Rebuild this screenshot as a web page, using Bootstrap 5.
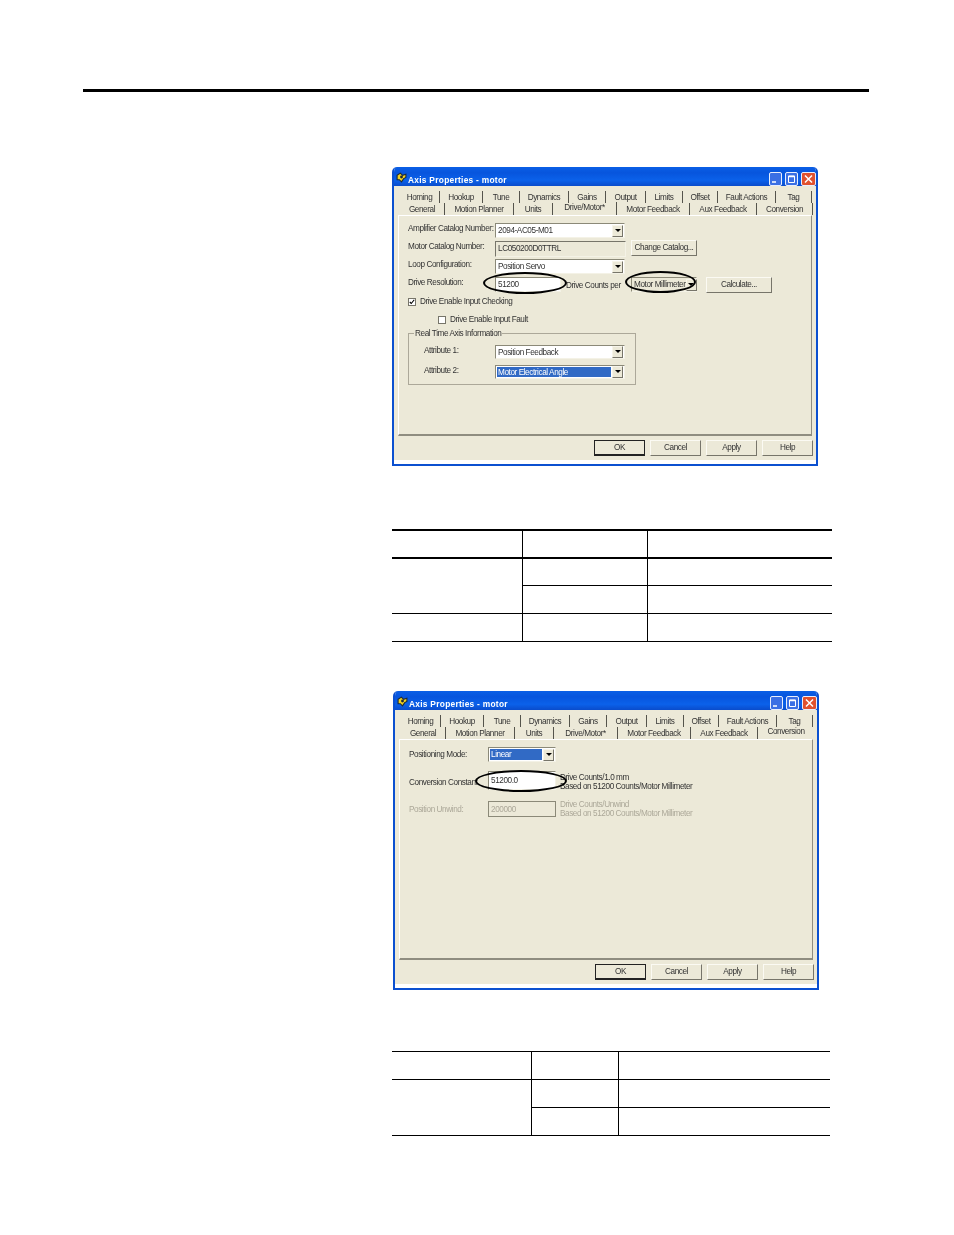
<!doctype html>
<html lang="en">
<head>
<meta charset="utf-8">
<title>Axis Properties</title>
<link href="https://cdn.jsdelivr.net/npm/bootstrap@5.3.0/dist/css/bootstrap.min.css" rel="stylesheet">
<style>
html,body{background:#fff}
body{height:1235px;overflow:hidden;font-family:"Liberation Sans",Arial,sans-serif}
.top-rule{height:3px;background:#000;margin:89px 85px 0 83px}
.page-col{margin-left:392px}
.xp-win{position:relative;width:426px;height:299px;margin-top:75px;border:2px solid #0b50d0;border-top:0;border-radius:5px 5px 0 0;background:#fff;color:#333;font-size:8.2px;letter-spacing:-.42px;line-height:10px;white-space:nowrap;filter:blur(.4px);overflow:hidden}
.xp-second{margin-top:49px;margin-left:1px}
.xp-title{height:19px;margin:0 -2px;background:linear-gradient(#0a5fe6,#0755dd 30%,#0b61ea 70%,#0a4ccb);color:#fff;font-weight:700;font-size:8.4px;letter-spacing:.27px;padding:5px 2px 0 4px}
.xp-title>span{padding-top:1px}
.xp-ico{width:11px;height:11px;margin:-3px 1px 0 0;flex:none}
.ctl{display:block;width:13px;height:14px;border:1px solid #e8eefc;border-radius:2px;background:#3a6fe4;margin-left:3px;flex:none}
.ctl-close{background:#e0512e;width:15px}
.xp-body{background:#ece9d8;height:274px;padding:0 3px 0 4px;display:flex;flex-direction:column}
.tabs-a,.tabs-b{display:grid;height:12px;margin-left:2px;text-align:center}
.tabs-a{grid-template-columns:40px 43px 37px 49px 37px 40px 37px 35px 58px 36px;margin-top:5px}
.tabs-b{grid-template-columns:45px 69px 39px 64px 73px 67px 56px}
.tabs-a>div,.tabs-b>div{border-right:1px solid #55544c;padding-top:2px}
.tabs-b>div.on{padding-top:1px;margin-top:-1px}
.tab-panel{height:221px;border:1px solid #fff;border-right-color:#8f8d80;border-bottom:2px solid #8f8d80;padding:7px 9px 0 9px;margin-right:1px}
.rowline{height:15px;margin-top:3px;display:flex;align-items:center}
.rowline:first-child{margin-top:0}
.lbl{width:87px;flex:none;padding-bottom:3px}
.combo,.field{height:15px;border:1px solid;border-color:#8b8978 #f4f2e6 #f4f2e6 #8b8978;background:#fff;display:flex;align-items:center;padding-left:2px;flex:none}
.field{padding-top:1px}
.combo>span:first-child{padding-top:1px}
.w130{width:130px}.w131{width:131px}.w65{width:66px}.w68{width:68px}
.combo>span:first-child{flex:1}
.arrow{width:11px;height:12px;background:#ece9d8;border:1px solid;border-color:#f7f5ea #77756a #77756a #f7f5ea;flex:none;margin-right:1px}
.arrow::after{content:"";display:block;width:0;height:0;margin:3px auto 0;border:3px solid transparent;border-top:3px solid #000;border-bottom:0}
.selected{background:#316ac5;color:#fff;padding-left:1px;align-self:stretch;margin:1px 1px 1px -1px;display:flex;align-items:center}
.readonly{background:#ece9d8;border-color:#77756a #f4f2e6 #f4f2e6 #77756a;height:16px}
.xbtn{height:16px;border:1px solid;border-color:#fbfaf3 #77756a #77756a #fbfaf3;background:#ece9d8;display:flex;align-items:center;justify-content:center;flex:none}
.btn-cat{width:66px;margin-left:5px;margin-top:-2px}
.btn-calc{width:66px;margin-left:9px}
.counts{width:65px;margin-left:5px;padding-top:2px;flex:none}
.check-row{display:flex;align-items:center;height:9px}
.check-one{margin-top:5px}
.check-two{margin-top:9px;margin-left:30px}
.tick{width:8px;height:8px;border:1px solid #77756a;background:#fff;margin-right:4px;display:block;flex:none}
.grp{position:relative;width:228px;height:52px;margin-top:9px;border:1px solid #aca899;padding:11px 10px 0 15px}
.grp-legend{position:absolute;left:5px;top:-5px;background:#ece9d8;padding:0 1px}
.grp .lbl{width:71px}
.grp .rowline{margin-top:6px;height:14px}
.grp .grp-first{margin-top:0}
.grp .combo{height:14px}
.xp-foot{display:flex;justify-content:flex-end;padding-top:4px;gap:5px}
.xp-foot .xbtn{width:51px}
.xp-foot .def{border:1px solid #222;border-bottom-width:2px;width:51px}
.ring{position:absolute;border:2px solid #000;border-radius:50%;background:transparent}
.ring-a{left:89px;top:105px;width:84px;height:22px}
.ring-b{left:231px;top:104px;width:71px;height:22px}
.ring-c{left:80px;top:79px;width:92px;height:22px}
.mode-row{height:15px;display:flex;align-items:center}
.lbl2{width:79px;flex:none}
.gap-conv{margin-top:9px;height:19px;display:flex;align-items:center}
.gap-conv .lbl2{padding-top:4px}
.gap-conv .two-line{padding-top:2px}
.gap-unw{margin-top:11px;height:16px;display:flex;align-items:center}
.gap-unw .lbl2{padding-top:1px}
.mute{color:#aca899}
.two-line{margin-left:4px;line-height:9px}
.h19{height:19px}
.h16{height:16px;background:#ece9d8;border-color:#8b8978}
.spec-a,.spec-b{table-layout:fixed;border-collapse:separate;border-spacing:0;margin:0}
.spec-a{width:440px;margin-top:63px}
.spec-b{width:438px;margin-top:61px}
.spec-a.table td,.spec-b.table td,.spec-a.table th,.spec-b.table th{padding:0;height:28px;border:0 solid #000;border-top-width:1px;background:transparent;box-shadow:none}
.spec-a.table th,.spec-a.table tbody tr:first-child td{border-top-width:2px}
.spec-a.table tr>*+*,.spec-b.table tr>*+*{border-left-width:1px}
.spec-a.table .nest,.spec-b.table .nest{border-left-width:1px}
.spec-a.table tbody tr:last-child td,.spec-b.table tbody tr:last-child td,.spec-a.table td.tail,.spec-b.table td.tail{border-bottom-width:1px;height:29px}
.ca1{width:130px}.ca2{width:125px}.cb1{width:139px}.cb2{width:87px}
</style>
</head>
<body>
<div class="top-rule"></div>
<main class="page-col">

<section class="xp-win">
  <div class="xp-title d-flex align-items-center">
    <svg class="xp-ico" viewBox="0 0 10 10"><path d="M1 3 4 1l2 2 3-1v3L7 6 5 9 3 7 1 7z" fill="#f2d21f" stroke="#1d2a3a" stroke-width="1"/><circle cx="5" cy="4.5" r="1.3" fill="#1d2a3a"/></svg>
    <span class="flex-grow-1">Axis Properties - motor</span>
    <svg class="ctl" viewBox="0 0 11 12"><path d="M2 9h4" stroke="#fff" stroke-width="1.5"/></svg>
    <svg class="ctl" viewBox="0 0 11 12"><path d="M2.5 3h6v6.5h-6z" fill="none" stroke="#fff"/><path d="M2.5 3.5h6" stroke="#fff" stroke-width="1.5"/></svg>
    <svg class="ctl ctl-close" viewBox="0 0 13 12"><path d="M3 2.5l7 7M10 2.5l-7 7" stroke="#fff" stroke-width="1.5"/></svg>
  </div>
  <div class="xp-body">
    <div class="tabs-a"><div>Homing</div><div>Hookup</div><div>Tune</div><div>Dynamics</div><div>Gains</div><div>Output</div><div>Limits</div><div>Offset</div><div>Fault Actions</div><div>Tag</div></div>
    <div class="tabs-b"><div>General</div><div>Motion Planner</div><div>Units</div><div class="on">Drive/Motor*</div><div>Motor Feedback</div><div>Aux Feedback</div><div>Conversion</div></div>
    <div class="tab-panel">
      <div class="rowline"><span class="lbl">Amplifier Catalog Number:</span><div class="combo w130"><span>2094-AC05-M01</span><span class="arrow"></span></div></div>
      <div class="rowline"><span class="lbl">Motor Catalog Number:</span><div class="field readonly w131">LC050200D0TTRL</div><div class="xbtn btn-cat">Change Catalog...</div></div>
      <div class="rowline"><span class="lbl">Loop Configuration:</span><div class="combo w130"><span>Position Servo</span><span class="arrow"></span></div></div>
      <div class="rowline"><span class="lbl">Drive Resolution:</span><div class="field w65">51200</div><span class="counts">Drive Counts per</span><div class="combo w65 bg-transparent"><span>Motor Millimeter</span><span class="arrow"></span></div><div class="xbtn btn-calc">Calculate...</div></div>
      <div class="check-row check-one"><svg class="tick" viewBox="0 0 8 8"><path d="M1 4l2 2 4-5" fill="none" stroke="#000" stroke-width="1.5"/></svg><span>Drive Enable Input Checking</span></div>
      <div class="check-row check-two"><span class="tick"></span><span>Drive Enable Input Fault</span></div>
      <div class="grp">
        <span class="grp-legend">Real Time Axis Information</span>
        <div class="rowline grp-first"><span class="lbl">Attribute 1:</span><div class="combo w130"><span>Position Feedback</span><span class="arrow"></span></div></div>
        <div class="rowline"><span class="lbl">Attribute 2:</span><div class="combo w130"><span class="selected">Motor Electrical Angle</span><span class="arrow"></span></div></div>
      </div>
    </div>
    <div class="xp-foot"><div class="xbtn def">OK</div><div class="xbtn">Cancel</div><div class="xbtn">Apply</div><div class="xbtn">Help</div></div>
  </div>
  <div class="ring ring-a"></div>
  <div class="ring ring-b"></div>
</section>

<table class="table spec-a">
  <colgroup><col class="ca1"><col class="ca2"><col></colgroup>
  <thead><tr><th></th><th></th><th></th></tr></thead>
  <tbody>
    <tr><td rowspan="2"></td><td></td><td></td></tr>
    <tr><td class="nest"></td><td></td></tr>
    <tr><td></td><td></td><td></td></tr>
  </tbody>
</table>

<section class="xp-win xp-second">
  <div class="xp-title d-flex align-items-center">
    <svg class="xp-ico" viewBox="0 0 10 10"><path d="M1 3 4 1l2 2 3-1v3L7 6 5 9 3 7 1 7z" fill="#f2d21f" stroke="#1d2a3a" stroke-width="1"/><circle cx="5" cy="4.5" r="1.3" fill="#1d2a3a"/></svg>
    <span class="flex-grow-1">Axis Properties - motor</span>
    <svg class="ctl" viewBox="0 0 11 12"><path d="M2 9h4" stroke="#fff" stroke-width="1.5"/></svg>
    <svg class="ctl" viewBox="0 0 11 12"><path d="M2.5 3h6v6.5h-6z" fill="none" stroke="#fff"/><path d="M2.5 3.5h6" stroke="#fff" stroke-width="1.5"/></svg>
    <svg class="ctl ctl-close" viewBox="0 0 13 12"><path d="M3 2.5l7 7M10 2.5l-7 7" stroke="#fff" stroke-width="1.5"/></svg>
  </div>
  <div class="xp-body">
    <div class="tabs-a"><div>Homing</div><div>Hookup</div><div>Tune</div><div>Dynamics</div><div>Gains</div><div>Output</div><div>Limits</div><div>Offset</div><div>Fault Actions</div><div>Tag</div></div>
    <div class="tabs-b"><div>General</div><div>Motion Planner</div><div>Units</div><div>Drive/Motor*</div><div>Motor Feedback</div><div>Aux Feedback</div><div class="on border-0">Conversion</div></div>
    <div class="tab-panel">
      <div class="mode-row"><span class="lbl2">Positioning Mode:</span><div class="combo w68"><span class="selected">Linear</span><span class="arrow"></span></div></div>
      <div class="gap-conv"><span class="lbl2">Conversion Constant</span><div class="field w68 h19">51200.0</div><div class="two-line">Drive Counts/1.0 mm<br>Based on 51200 Counts/Motor Millimeter</div></div>
      <div class="gap-unw mute"><span class="lbl2">Position Unwind:</span><div class="field w68 h16 mute">200000</div><div class="two-line">Drive Counts/Unwind<br>Based on 51200 Counts/Motor Millimeter</div></div>
    </div>
    <div class="xp-foot"><div class="xbtn def">OK</div><div class="xbtn">Cancel</div><div class="xbtn">Apply</div><div class="xbtn">Help</div></div>
  </div>
  <div class="ring ring-c"></div>
</section>

<table class="table spec-b">
  <colgroup><col class="cb1"><col class="cb2"><col></colgroup>
  <thead><tr><th></th><th></th><th></th></tr></thead>
  <tbody>
    <tr><td rowspan="2" class="tail"></td><td></td><td></td></tr>
    <tr><td class="nest"></td><td></td></tr>
  </tbody>
</table>

</main>
</body>
</html>
